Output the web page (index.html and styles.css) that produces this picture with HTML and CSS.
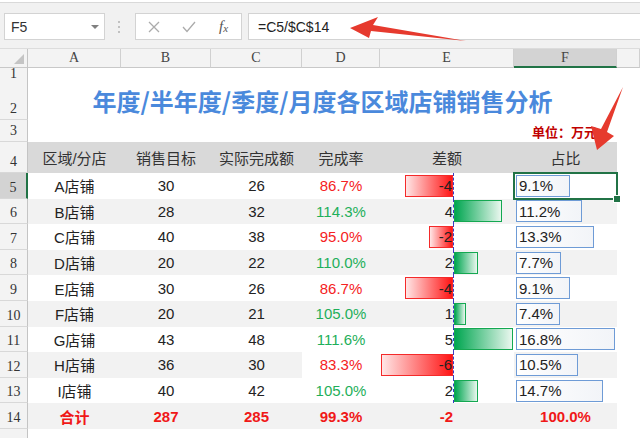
FILE: index.html
```
<!DOCTYPE html>
<html lang="zh-CN">
<head>
    <meta charset="UTF-8">
    <meta name="viewport" content="width=device-width, initial-scale=1.0">
    <title>各区域店铺销售分析</title>
    <link rel="stylesheet" href="styles.css">
</head>
<body>

    <div class="toolbar">
        <div class="namebox">F5<span class="caret"></span></div>
        <svg class="grip" width="4" height="14"><circle cx="2" cy="2" r="1"/><circle cx="2" cy="7" r="1"/><circle cx="2" cy="12" r="1"/></svg>
        <div class="fxbox">
            <span class="tool"><svg width="12" height="12"><path d="M1 1L11 11M11 1L1 11"/></svg></span>
            <span class="tool"><svg width="14" height="12"><path d="M1 6L5 10.5L13 1"/></svg></span>
            <span class="tool fx"><i>f</i><i class="x">x</i></span>
        </div>
        <div class="formula">=C5/$C$14</div>
    </div>

    <div class="sheet">
        <div class="row colhead">
            <div class="rh corner"><svg width="12" height="12"><polygon points="11,1 11,11 1,11"/></svg></div>
            <div class="ch">A</div>
            <div class="ch">B</div>
            <div class="ch">C</div>
            <div class="ch">D</div>
            <div class="ch">E</div>
            <div class="ch sel">F</div>
            <div class="ch"></div>
        </div>

        <div class="row r1"><div class="rh">1</div></div>
        <div class="row r2">
            <div class="rh">2</div>
            <div class="title">年度/半年度/季度/月度各区域店铺销售分析</div>
        </div>
        <div class="row r3">
            <div class="rh">3</div>
            <div class="unit">单位：万元</div>
        </div>

        <div class="row r4 thead">
            <div class="rh">4</div>
            <div class="c">区域/分店</div>
            <div class="c">销售目标</div>
            <div class="c">实际完成额</div>
            <div class="c">完成率</div>
            <div class="c">差额</div>
            <div class="c">占比</div>
        </div>

        <div class="row dr">
            <div class="rh sel">5</div>
            <div class="c">A店铺</div><div class="c">30</div><div class="c">26</div>
            <div class="c red">86.7%</div>
            <div class="c diff"><div class="neg"><span class="bar down" style="width:48px">-4</span></div><div class="pos"></div></div>
            <div class="c share active"><span class="pbar" style="width:54px">9.1%</span></div>
        </div>
        <div class="row dr alt">
            <div class="rh">6</div>
            <div class="c">B店铺</div><div class="c">28</div><div class="c">32</div>
            <div class="c green">114.3%</div>
            <div class="c diff"><div class="neg">4</div><div class="pos"><span class="bar up" style="width:48px"></span></div></div>
            <div class="c share"><span class="pbar" style="width:66px">11.2%</span></div>
        </div>
        <div class="row dr">
            <div class="rh">7</div>
            <div class="c">C店铺</div><div class="c">40</div><div class="c">38</div>
            <div class="c red">95.0%</div>
            <div class="c diff"><div class="neg"><span class="bar down" style="width:24px">-2</span></div><div class="pos"></div></div>
            <div class="c share"><span class="pbar" style="width:78px">13.3%</span></div>
        </div>
        <div class="row dr alt">
            <div class="rh">8</div>
            <div class="c">D店铺</div><div class="c">20</div><div class="c">22</div>
            <div class="c green">110.0%</div>
            <div class="c diff"><div class="neg">2</div><div class="pos"><span class="bar up" style="width:24px"></span></div></div>
            <div class="c share"><span class="pbar" style="width:45px">7.7%</span></div>
        </div>
        <div class="row dr">
            <div class="rh">9</div>
            <div class="c">E店铺</div><div class="c">30</div><div class="c">26</div>
            <div class="c red">86.7%</div>
            <div class="c diff"><div class="neg"><span class="bar down" style="width:48px">-4</span></div><div class="pos"></div></div>
            <div class="c share"><span class="pbar" style="width:54px">9.1%</span></div>
        </div>
        <div class="row dr alt">
            <div class="rh">10</div>
            <div class="c">F店铺</div><div class="c">20</div><div class="c">21</div>
            <div class="c green">105.0%</div>
            <div class="c diff"><div class="neg">1</div><div class="pos"><span class="bar up" style="width:12px"></span></div></div>
            <div class="c share"><span class="pbar" style="width:44px">7.4%</span></div>
        </div>
        <div class="row dr">
            <div class="rh">11</div>
            <div class="c">G店铺</div><div class="c">43</div><div class="c">48</div>
            <div class="c green">111.6%</div>
            <div class="c diff"><div class="neg">5</div><div class="pos"><span class="bar up" style="width:59px"></span></div></div>
            <div class="c share"><span class="pbar" style="width:99px">16.8%</span></div>
        </div>
        <div class="row dr alt">
            <div class="rh">12</div>
            <div class="c">H店铺</div><div class="c">36</div><div class="c">30</div>
            <div class="c red plain">83.3%</div>
            <div class="c diff plain"><div class="neg"><span class="bar down" style="width:72px">-6</span></div><div class="pos"></div></div>
            <div class="c share"><span class="pbar" style="width:62px">10.5%</span></div>
        </div>
        <div class="row dr">
            <div class="rh">13</div>
            <div class="c">I店铺</div><div class="c">40</div><div class="c">42</div>
            <div class="c green">105.0%</div>
            <div class="c diff"><div class="neg">2</div><div class="pos"><span class="bar up" style="width:24px"></span></div></div>
            <div class="c share"><span class="pbar" style="width:87px">14.7%</span></div>
        </div>
        <div class="row dr alt total">
            <div class="rh">14</div>
            <div class="c">合计</div><div class="c">287</div><div class="c">285</div>
            <div class="c">99.3%</div>
            <div class="c diff"><div class="neg">-2</div><div class="pos"></div></div>
            <div class="c share">100.0%</div>
        </div>
        <div class="row r15"><div class="rh"></div></div>
    </div>

    <svg class="arrows" width="640" height="438">
        <polygon points="350,28 378,17 373,25 466,41 371,31 369,38"/>
        <polygon points="597,150 591,126 601,129 623,87 607,132 614,136"/>
    </svg>

</body>
</html>
```

FILE: styles.css
```
* {
    box-sizing: border-box;
}
body {
    margin: 0;
    width: 640px;
    height: 438px;
    overflow: hidden;
    position: relative;
    background: #fff;
    font-family: "Liberation Sans", "Noto Sans CJK SC", sans-serif;
    color: #222;
}

/* formula bar */
.toolbar {
    margin-top: 2px;
    height: 46px;
    border-top: 1px solid #d9d9d9;
    background: #f1f1f1;
    display: flex;
    align-items: flex-start;
    padding: 10px 0 0 4px;
}
.namebox, .fxbox, .formula {
    height: 27px;
    border: 1px solid #d3d3d3;
    background: #fff;
    display: flex;
    align-items: center;
}
.namebox {
    width: 101px;
    padding-left: 6px;
    font-size: 14px;
    color: #333;
}
.caret {
    margin-left: auto;
    margin-right: 5px;
    border-left: 4px solid transparent;
    border-right: 4px solid transparent;
    border-top: 4px solid #808080;
}
.grip {
    margin: 7px 14px 0 12px;
    fill: #b0b0b0;
}
.fxbox {
    width: 107px;
}
.tool {
    width: 35px;
    display: flex;
    justify-content: center;
}
.tool path {
    stroke: #ababab;
    stroke-width: 1.3;
    fill: none;
}
.fx {
    font-family: "Liberation Serif", serif;
    font-size: 15px;
    color: #555;
}
.fx .x {
    font-size: 11px;
    margin-top: 4px;
}
.formula {
    flex: 1;
    margin-left: 6px;
    border-right: none;
    padding-left: 9px;
    font-size: 14px;
    color: #222;
}

/* grid */
.row {
    display: grid;
    grid-template-columns: 28px 93px 90px 91px 78px 134px 103px 1fr;
}
.colhead {
    height: 20px;
    background: #f3f3f3;
    border-top: 1px solid #dcdcdc;
}
.ch {
    border-right: 1px solid #d0d0d0;
    border-bottom: 1px solid #c8c8c8;
    display: flex;
    align-items: center;
    justify-content: center;
    font-family: "Liberation Serif", serif;
    font-size: 14px;
    color: #444;
}
.ch.sel {
    background: #d3d3d3;
    border-bottom: 2px solid #217346;
}
.rh {
    background: #f3f3f3;
    border-right: 1px solid #c4c4c4;
    border-bottom: 1px solid #d8d8d8;
    display: flex;
    align-items: flex-end;
    justify-content: center;
    font-family: "Liberation Serif", serif;
    font-size: 14px;
    line-height: 14px;
    padding-bottom: 3px;
    color: #333;
}
.rh.sel {
    background: #d3d3d3;
    border-right: 2px solid #217346;
}
.corner {
    border-bottom-color: #c8c8c8;
    align-items: flex-end;
    justify-content: flex-end;
    padding: 0 2px 2px 0;
}
.corner polygon {
    fill: #c4c4c4;
}
.r1 { height: 11px; }
.r1 .rh { padding-bottom: 0; line-height: 11px; }
.r2 { height: 41px; }
.r3 { height: 22px; }
.r4 { height: 31px; }
.dr { height: 25.6px; }
.r15 { height: 12px; }

.title {
    grid-column: 2 / 8;
    display: flex;
    align-items: center;
    justify-content: center;
    padding-top: 2px;
    font-family: "Noto Sans CJK SC", sans-serif;
    font-size: 24px;
    font-weight: bold;
    color: #4a89dc;
}
.unit {
    grid-column: 2 / 8;
    display: flex;
    align-items: center;
    justify-content: flex-end;
    padding-right: 20px;
    font-size: 13px;
    font-weight: bold;
    color: #c00000;
}

/* cells */
.c {
    display: flex;
    align-items: center;
    justify-content: center;
    font-size: 15px;
    white-space: nowrap;
}
.thead .c {
    background: #d9d9d9;
    color: #333;
}
.alt .c { background: #f2f2f2; }
.alt .c.plain { background: #fff; }
.red { color: #f52222; }
.green { color: #1eaf5a; }
.total .c {
    color: #f01818;
    font-weight: bold;
}

.diff {
    display: grid;
    grid-template-columns: 73px 61px;
    align-items: stretch;
}
.neg {
    display: flex;
    align-items: center;
    justify-content: flex-end;
}
.pos {
    display: flex;
    align-items: center;
    border-left: 1px dashed #3b3bc4;
}
.total .pos { border-left: none; }
.bar {
    height: 22px;
    display: flex;
    align-items: center;
    justify-content: flex-end;
}
.down {
    background: linear-gradient(to right, #ffe6e6, #ff1414);
    border: 1px solid #f42a2a;
}
.up {
    background: linear-gradient(to right, #00a650, #eaf7ef);
    border: 1px solid #14a851;
}

.share {
    justify-content: flex-start;
    padding-left: 2px;
}
.total .share {
    justify-content: center;
    padding-left: 0;
}
.pbar {
    height: 22px;
    border: 1px solid #6e9bd6;
    background: linear-gradient(to right, #fff, #f2f4f8);
    padding-left: 2px;
    display: flex;
    align-items: center;
    color: #222;
}
.active {
    position: relative;
    z-index: 1;
    outline: 2px solid #217346;
    outline-offset: -1px;
}
.active::after {
    content: "";
    position: absolute;
    right: -4px;
    bottom: -4px;
    width: 6px;
    height: 6px;
    background: #217346;
    border: 1px solid #fff;
}

.arrows {
    position: absolute;
    top: 0;
    left: 0;
    pointer-events: none;
}
.arrows polygon {
    fill: #e63a2e;
}
```
